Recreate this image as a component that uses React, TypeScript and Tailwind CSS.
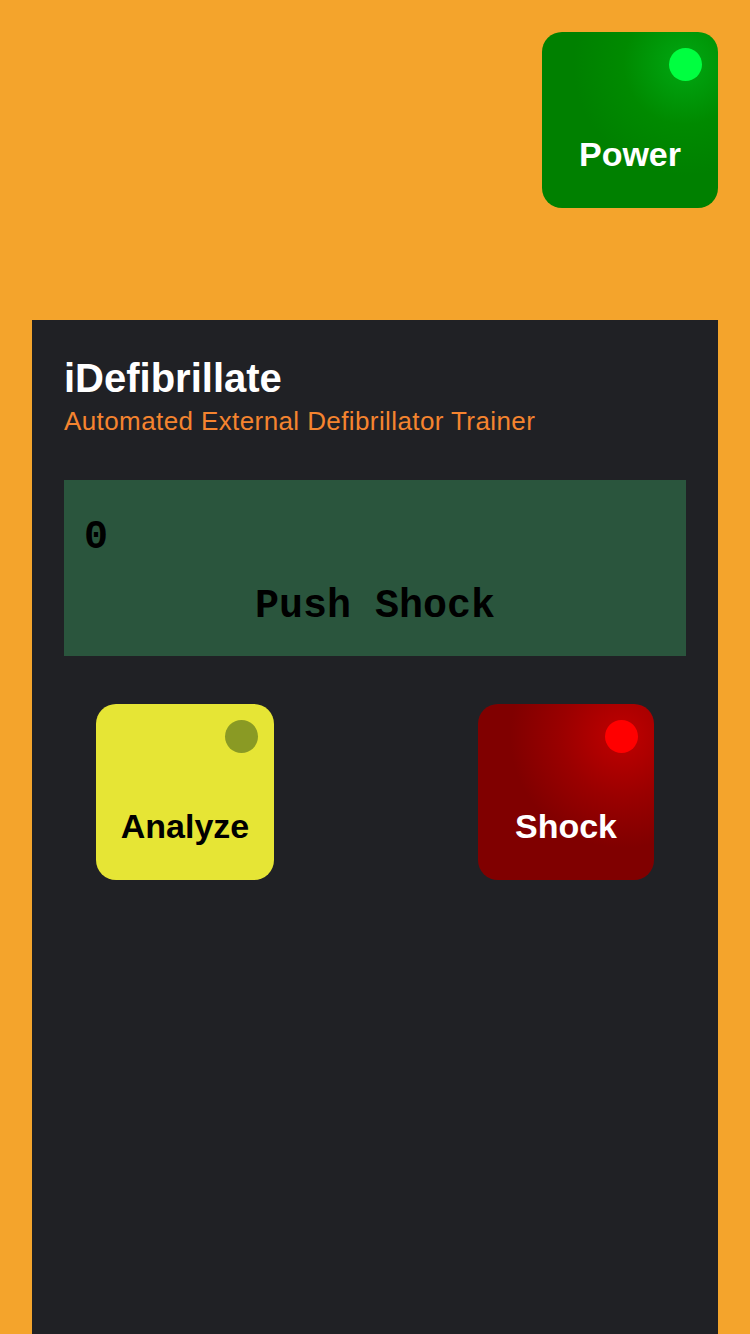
import React from 'react';

type PadProps = {
  label: string;
  className: string;
  led: string;
  text: string;
};

const Pad: React.FC<PadProps> = ({ label, className, led, text }) => (
  <button
    className={`relative flex flex-col items-center justify-end pb-[37px] rounded-[20px] ${className}`}
  >
    <span className={`absolute top-4 right-4 w-[33px] h-[33px] rounded-full ${led}`} />
    <span className={`text-[34px] leading-none font-bold ${text}`}>{label}</span>
  </button>
);

const App: React.FC = () => {
  return (
    <div className="w-[750px] h-[1334px] bg-[#f4a42c] overflow-hidden font-['Liberation_Sans',Arial,sans-serif]">
      {/* Power */}
      <div className="flex justify-end pt-8 pr-8">
        <Pad
          label="Power"
          className="w-[176px] h-[176px] bg-[radial-gradient(circle_at_81%_18%,#00a812_0%,#008a00_30%,#008000_55%)]"
          led="bg-[#00ff40]"
          text="text-white"
        />
      </div>

      {/* Device panel */}
      <div className="mt-[112px] mx-8 h-[1014px] bg-[#202125] px-8 pt-[38px]">
        <h1 className="text-[40px] leading-none font-bold text-white">iDefibrillate</h1>
        <p className="mt-[10px] text-[26px] leading-none tracking-[0.4px] text-[#f5842f]">
          Automated External Defibrillator Trainer
        </p>

        {/* LCD */}
        <div className="mt-[46px] h-[176px] bg-[#2a553d] pt-[38px] font-['Liberation_Mono','Courier_New',monospace] font-bold text-black">
          <div className="pl-[20px] text-[40px] leading-none">0</div>
          <div className="mt-[29px] text-center text-[40px] leading-none">Push Shock</div>
        </div>

        {/* Controls */}
        <div className="mt-12 flex justify-between px-8">
          <Pad
            label="Analyze"
            className="w-[178px] h-[176px] bg-[#e6e535]"
            led="bg-[#8a9a24]"
            text="text-black"
          />
          <Pad
            label="Shock"
            className="w-[176px] h-[176px] bg-[radial-gradient(circle_at_82%_18%,#c00000_0%,#9a0000_30%,#800000_55%)]"
            led="bg-[#ff0000]"
            text="text-white"
          />
        </div>
      </div>
    </div>
  );
};

export default App;
